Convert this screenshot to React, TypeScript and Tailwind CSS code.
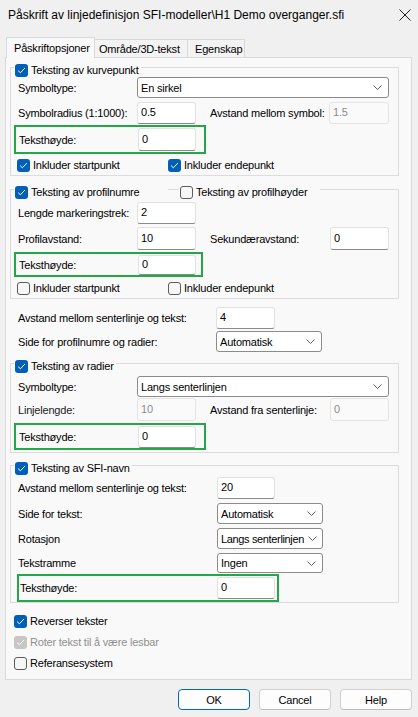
import React from 'react';

function Check({ on = false, dim = false }: { on?: boolean; dim?: boolean }) {
  if (!on) {
    return <span className="block h-[13px] w-[13px] shrink-0 rounded-[3px] border border-[#5c5c5c] bg-[#f7f7f7]" />;
  }
  return (
    <span className={`flex h-[13px] w-[13px] shrink-0 items-center justify-center rounded-[3px] ${dim ? 'bg-[#c6c6c6]' : 'bg-[#005fb8]'}`}>
      <svg width="13" height="13" viewBox="0 0 13 13" fill="none">
        <path d="M3.4 6.9 5.4 8.8 9.6 4.4" stroke="white" strokeWidth="1" strokeLinecap="round" strokeLinejoin="round" />
      </svg>
    </span>
  );
}

function CheckItem({ label, on, dim, cls = '' }: { label: string; on?: boolean; dim?: boolean; cls?: string }) {
  return (
    <div className={`flex h-[14px] items-center gap-[3px] ${cls}`}>
      <Check on={on} dim={dim} />
      <span className={`whitespace-nowrap ${dim ? 'text-[#8f8f8f]' : ''}`}>{label}</span>
    </div>
  );
}

function Field({ v, cls = 'w-[59px] h-[22px]', off = false }: { v: string; cls?: string; off?: boolean }) {
  return (
    <div
      className={`flex shrink-0 items-center rounded-[3px] border pb-[2px] pl-[3px] ${
        off ? 'border-[#e4e4e4] bg-[#fafafa] text-[#8c8c8c]' : 'border-[#e2e2e2] border-b-[#8a8a8a] bg-white'
      } ${cls}`}
    >
      {v}
    </div>
  );
}

function Combo({ v, cls }: { v: string; cls: string }) {
  return (
    <div className={`flex shrink-0 items-center justify-between gap-[1px] rounded-[3px] border border-[#8b8b8b] bg-white pl-[3px] ${cls}`}>
      <span className="min-w-0 whitespace-nowrap">{v}</span>
      <svg width="9" height="5" viewBox="0 0 9 5" className="shrink-0">
        <path d="M0.5 0.5 4.5 4.5 8.5 0.5" stroke="#606060" fill="none" />
      </svg>
    </div>
  );
}

// header sits over the group's top border, like a Win32 group box with a checkbox
function Head({ label, on }: { label: string; on?: boolean }) {
  return (
    <div className="-mt-[5px] ml-[3px] flex h-[14px] items-center">
      <div className="flex h-[14px] items-center gap-[3px] bg-[#f9f9f9] pl-[1px] pr-[2px]">
        <Check on={on} />
        <span className="whitespace-nowrap">{label}</span>
      </div>
    </div>
  );
}

function Green({ cls, label = 'Teksthøyde:', lw = 'w-[119px]', children }: { cls: string; label?: string; lw?: string; children: React.ReactNode }) {
  return (
    <div className={`flex items-center border-2 border-[#22a847] ${cls}`}>
      <span className={`shrink-0 ${lw}`}>{label}</span>
      {children}
    </div>
  );
}

export default function App() {
  return (
    <div className="flex h-[717px] w-[418px] flex-col overflow-hidden bg-[#f0f0f0] font-['Liberation_Sans',Arial,sans-serif] text-[11px] leading-[14px] tracking-[-0.2px] text-black">
      {/* Title bar */}
      <div className="flex h-[30px] shrink-0 items-center justify-between pl-[8px] pr-[7px] text-[12px] tracking-normal">
        <span>Påskrift av linjedefinisjon SFI-modeller\H1 Demo overganger.sfi</span>
        <svg width="12" height="12" viewBox="0 0 12 12" fill="none">
          <path d="M0.5 0.5 11.5 11.5 M11.5 0.5 0.5 11.5" stroke="#1b1b1b" strokeWidth="1" />
        </svg>
      </div>

      <div className="flex flex-col pl-[5px]">
        {/* Tabs */}
        <div className="mt-[7px] flex h-[20px] items-start">
          <div className="relative z-10 -mb-px ml-[1px] flex h-[21px] w-[89px] items-center border border-b-0 border-[#d9d9d9] bg-[#f9f9f9] pl-[7px]">
            Påskriftopsjoner
          </div>
          <div className="mt-[2px] flex h-[18px] w-[93px] items-center border-r border-t border-[#d9d9d9] bg-[#f3f3f3] pl-[4px]">
            Område/3D-tekst
          </div>
          <div className="mt-[2px] flex h-[18px] w-[57px] items-center border-r border-t border-[#d9d9d9] bg-[#f3f3f3] pl-[7px]">
            Egenskap
          </div>
        </div>

        {/* Tab page */}
        <div className="flex h-[623px] w-[407px] flex-col border border-[#d9d9d9] bg-[#f9f9f9]">
          {/* Teksting av kurvepunkt */}
          <div className="ml-[4px] mt-[9px] flex w-[389px] flex-col border border-[#dcdcdc] pb-[3px]">
            <Head label="Teksting av kurvepunkt" on />
            <div className="flex h-[21px] items-center pl-[7px]">
              <span className="w-[119px] shrink-0">Symboltype:</span>
              <Combo v="En sirkel" cls="h-[21px] w-[252px] pr-[6px]" />
            </div>
            <div className="mt-[4px] flex h-[22px] items-center pl-[7px]">
              <span className="w-[119px] shrink-0">Symbolradius (1:1000):</span>
              <Field v="0.5" />
              <span className="ml-[14px] w-[119px] shrink-0">Avstand mellom symbol:</span>
              <Field v="1.5" off cls="w-[60px] h-[22px]" />
            </div>
            <Green cls="ml-[3px] mt-[1px] h-[29px] w-[192px] pl-[3px]">
              <Field v="0" cls="w-[58px] h-[23px]" />
            </Green>
            <div className="mt-[4px] flex h-[14px] items-center pl-[6px]">
              <CheckItem label="Inkluder startpunkt" on cls="w-[151px]" />
              <CheckItem label="Inkluder endepunkt" on />
            </div>
          </div>

          {/* Teksting av profilnumre */}
          <div className="ml-[4px] mt-[13px] flex w-[389px] flex-col border border-[#dcdcdc] pb-[3px]">
            <div className="-mt-[5px] ml-[3px] flex h-[14px] items-center">
              <div className="flex h-[14px] w-[154px] items-center gap-[3px] bg-[#f9f9f9] pl-[1px]">
                <Check on />
                <span className="whitespace-nowrap">Teksting av profilnumre</span>
              </div>
              <div className="ml-[11px] flex h-[14px] w-[141px] items-center gap-[3px] bg-[#f9f9f9] pl-[1px]">
                <Check />
                <span className="whitespace-nowrap">Teksting av profilhøyder</span>
              </div>
            </div>
            <div className="mt-[3px] flex h-[22px] items-center pl-[7px]">
              <span className="w-[119px] shrink-0">Lengde markeringstrek:</span>
              <Field v="2" />
            </div>
            <div className="mt-[3px] flex h-[23px] items-center pl-[7px]">
              <span className="w-[119px] shrink-0">Profilavstand:</span>
              <Field v="10" cls="w-[59px] h-[23px]" />
              <span className="ml-[14px] w-[120px] shrink-0">Sekundæravstand:</span>
              <Field v="0" cls="w-[59px] h-[23px]" />
            </div>
            <Green cls="ml-[3px] mt-[2px] h-[25px] w-[189px] pl-[3px]">
              <Field v="0" cls="w-[58px] h-[20px]" />
            </Green>
            <div className="mt-[4px] flex h-[14px] items-center pl-[6px]">
              <CheckItem label="Inkluder startpunkt" cls="w-[151px]" />
              <CheckItem label="Inkluder endepunkt" />
            </div>
          </div>

          <div className="mt-[8px] flex h-[22px] items-center pl-[12px]">
            <span className="w-[198px] shrink-0">Avstand mellom senterlinje og tekst:</span>
            <Field v="4" />
          </div>
          <div className="mt-[2px] flex h-[21px] items-center pl-[12px]">
            <span className="w-[198px] shrink-0">Side for profilnumre og radier:</span>
            <Combo v="Automatisk" cls="h-[21px] w-[106px] pr-[6px]" />
          </div>

          {/* Teksting av radier */}
          <div className="ml-[4px] mt-[11px] flex w-[389px] flex-col border border-[#dcdcdc] pb-[2px]">
            <Head label="Teksting av radier" on />
            <div className="mt-[3px] flex h-[21px] items-center pl-[7px]">
              <span className="w-[119px] shrink-0">Symboltype:</span>
              <Combo v="Langs senterlinjen" cls="h-[21px] w-[252px] pr-[6px]" />
            </div>
            <div className="mt-[1px] flex h-[23px] items-center pl-[7px]">
              <span className="w-[119px] shrink-0 text-[#222]">Linjelengde:</span>
              <Field v="10" off cls="w-[59px] h-[23px]" />
              <span className="ml-[14px] w-[120px] shrink-0">Avstand fra senterlinje:</span>
              <Field v="0" off cls="w-[59px] h-[23px]" />
            </div>
            <Green cls="ml-[3px] mt-[2px] h-[27px] w-[192px] pl-[3px]">
              <Field v="0" cls="w-[58px] h-[22px]" />
            </Green>
          </div>

          {/* Teksting av SFI-navn */}
          <div className="ml-[4px] mt-[12px] flex w-[389px] flex-col border border-[#dcdcdc]">
            <Head label="Teksting av SFI-navn" on />
            <div className="mt-[2px] flex h-[22px] items-center pl-[7px]">
              <span className="w-[199px] shrink-0">Avstand mellom senterlinje og tekst:</span>
              <Field v="20" cls="w-[58px] h-[22px]" />
            </div>
            <div className="mt-[4px] flex h-[21px] items-center pl-[7px]">
              <span className="w-[199px] shrink-0">Side for tekst:</span>
              <Combo v="Automatisk" cls="h-[21px] w-[106px] pr-[6px]" />
            </div>
            <div className="mt-[4px] flex h-[21px] items-center pl-[7px]">
              <span className="w-[199px] shrink-0">Rotasjon</span>
              <Combo v="Langs senterlinjen" cls="h-[21px] w-[106px] pr-[5px] tracking-[-0.35px]" />
            </div>
            <div className="mt-[4px] flex h-[20px] items-center pl-[7px]">
              <span className="w-[199px] shrink-0">Tekstramme</span>
              <Combo v="Ingen" cls="h-[20px] w-[106px] pr-[6px]" />
            </div>
            <Green cls="ml-[6px] mt-[1px] h-[28px] w-[262px] pl-[1px]" lw="w-[197px]">
              <Field v="0" cls="w-[58px] h-[22px]" />
            </Green>
          </div>

          <div className="mt-[11px] flex flex-col gap-[7px] pl-[8px]">
            <CheckItem label="Reverser tekster" on />
            <CheckItem label="Roter tekst til å være lesbar" on dim />
            <CheckItem label="Referansesystem" />
          </div>
        </div>

        {/* Buttons */}
        <div className="mt-[9px] flex w-[407px] justify-end gap-[9px]">
          <button className="flex h-[21px] w-[72px] items-center justify-center rounded-[4px] border border-[#0067c0] bg-[#fdfdfd]">OK</button>
          <button className="flex h-[21px] w-[72px] items-center justify-center rounded-[4px] border border-[#d0d0d0] border-b-[#bdbdbd] bg-[#fdfdfd]">Cancel</button>
          <button className="flex h-[21px] w-[72px] items-center justify-center rounded-[4px] border border-[#d0d0d0] border-b-[#bdbdbd] bg-[#fdfdfd]">Help</button>
        </div>
      </div>
    </div>
  );
}
